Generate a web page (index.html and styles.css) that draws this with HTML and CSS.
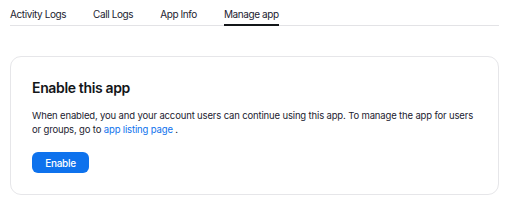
FILE: index.html
```html
<!DOCTYPE html>
<html lang="en">
<head>
    <meta charset="UTF-8">
    <meta name="viewport" content="width=device-width, initial-scale=1.0">
    <title>Manage app</title>
    <link rel="stylesheet" href="styles.css">
</head>
<body>
    <div class="page">
        <div class="tabs">
            <a href="#">Activity Logs</a>
            <a href="#">Call Logs</a>
            <a href="#">App Info</a>
            <a href="#" class="active">Manage app</a>
        </div>
        <div class="card">
            <h2>Enable this app</h2>
            <p>When enabled, you and your account users can continue using this app. To manage the app for users or groups, go to <a href="#">app listing page</a> .</p>
            <button class="enable-btn">Enable</button>
        </div>
    </div>
</body>
</html>
```

FILE: styles.css
```css
* {
    margin: 0;
    padding: 0;
    box-sizing: border-box;
    font-family: 'Inter', 'Noto Sans', sans-serif;
}

body {
    background-color: #fff;
}

.page {
    padding: 0 13px 0 10px;
}

.tabs {
    display: flex;
    gap: 27px;
    height: 26px;
    border-bottom: 1px solid #e3e3e6;
}

.tabs a {
    text-decoration: none;
    color: #222230;
    font-size: 10px;
    letter-spacing: -0.4px;
    line-height: 14px;
    padding-top: 7px;
    border-bottom: 2px solid transparent;
    margin-bottom: -1px;
}

.tabs a.active {
    border-bottom-color: #131619;
}

.card {
    margin-top: 30px;
    border: 1px solid #e6e6e9;
    border-radius: 11px;
    padding: 21px 21px 21px;
}

.card h2 {
    font-size: 14px;
    font-weight: 600;
    letter-spacing: -0.35px;
    line-height: 20px;
    color: #131619;
}

.card p {
    margin-top: 11px;
    font-size: 9.5px;
    letter-spacing: -0.15px;
    line-height: 14px;
    color: #222230;
}

.card p a {
    color: #0e72ed;
    text-decoration: none;
}

.enable-btn {
    margin-top: 15px;
    width: 57px;
    height: 21px;
    border: none;
    border-radius: 6px;
    background-color: #0e72ed;
    color: #fff;
    font-size: 10px;
    letter-spacing: -0.3px;
    font-weight: 500;
    cursor: pointer;
}
```
